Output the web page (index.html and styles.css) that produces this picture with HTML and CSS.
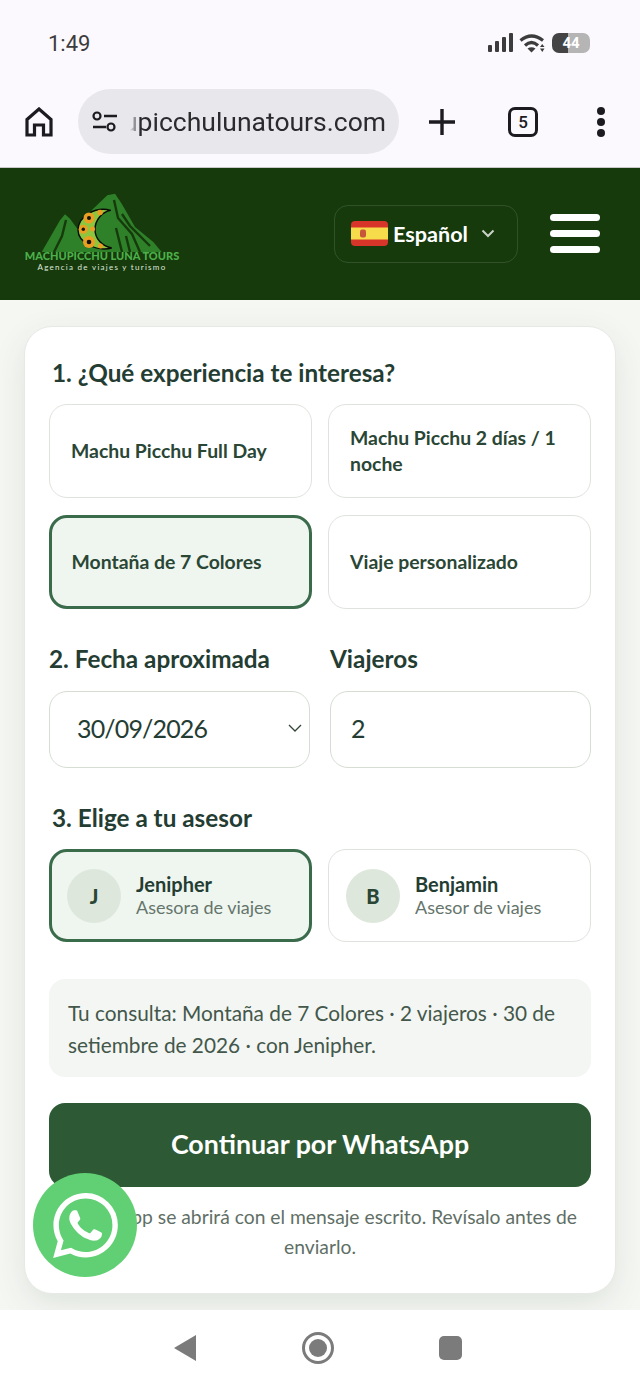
FILE: index.html
```html
<!DOCTYPE html>
<html lang="es">
<head>
    <meta charset="UTF-8">
    <title>Machupicchu Luna Tours</title>
    <link rel="stylesheet" href="styles.css">
</head>
<body>
<div class="page">
    <!-- navegador -->
    <div class="chrome">
        <div class="status">
            <span class="time">1:49</span>
            <div class="status-icons">
                <svg class="ic-signal" width="25" height="20" viewBox="0 0 25 20"><rect x="0" y="12" width="4" height="7" rx="1"/><rect x="7" y="8" width="4" height="11" rx="1"/><rect x="14" y="4" width="4" height="15" rx="1"/><rect x="21" y="0" width="4" height="19" rx="1"/></svg>
                <svg class="ic-wifi" width="27" height="20" viewBox="0 0 27 20"><path d="M1.500 7.500Q12.500-1.500 24 7.500M6 12.500Q12.500 6.500 19 12.500" fill="none" stroke="#3c3c3c" stroke-width="3.200"/><path d="M8.500 15.500Q12.500 13 16.500 15.500L12.500 19.500Z" fill="#3c3c3c"/><path d="M21 14h4.500l-2.250-3ZM21 15.500h4.500l-2.250 3.500Z" fill="#3c3c3c"/></svg>
                <div class="battery"><span>44</span></div>
            </div>
        </div>
        <div class="toolbar">
            <svg class="ic-home" width="28" height="30" viewBox="0 0 28 30"><path d="M2 12.500 14 2l12 10.500V28h-7.500v-10h-9v10H2Z" fill="none" stroke="#1c1b1f" stroke-width="3.200" stroke-linejoin="miter"/></svg>
            <div class="omnibox">
                <svg width="26" height="22" viewBox="0 0 26 22"><circle cx="5" cy="5" r="3.500" fill="none" stroke="#1c1b1f" stroke-width="2.200"/><path d="M12 5h13M1 16h13" stroke="#1c1b1f" stroke-width="2.400"/><circle cx="19" cy="16" r="3.500" fill="none" stroke="#1c1b1f" stroke-width="2.200"/></svg>
                <div class="url"><span>machupicchulunatours.com</span></div>
            </div>
            <svg class="ic-plus" width="26" height="26" viewBox="0 0 26 26"><path d="M13 0v26M0 13h26" stroke="#1c1b1f" stroke-width="3.400"/></svg>
            <div class="tabs">5</div>
            <div class="dots"><i></i><i></i><i></i></div>
        </div>
    </div>

    <!-- cabecera -->
    <header class="site-header">
        <div class="logo">
            <svg class="logo-art" width="156" height="60" viewBox="0 0 156 60">
                <path d="M17.700 60 36 28.300 41 22.300 46 26.700 53.300 36.700 67.700 18.300 83.300 3.300 91 1.700 97.700 11.700 104.300 23.300 111 35 129.300 50 137.700 60Z" fill="#2e8029"/>
                <path d="M90 8 94 26 108 42 116 60M98 22 106 34 126 54M42 28 38 44 30 60M102 44 106 60M92 36 98 60" fill="none" stroke="#163a0c" stroke-width="2.400"/>
                <path d="M86.700 18.300C72 14 54 24 54 38 54 50 72 60 87.700 56 78 54 71 47 71 37.300 71 28 78 20 86.700 18.300Z" fill="#8cc63f" stroke="#0b0b05" stroke-width="1.400"/>
                <circle cx="65" cy="26" r="5.500" fill="#eb9f22"/><circle cx="65" cy="26" r="2" fill="#111"/>
                <circle cx="59.300" cy="37.300" r="4.500" fill="#eb9f22"/><circle cx="59.300" cy="37.300" r="1.700" fill="#111"/>
                <circle cx="65" cy="50" r="6" fill="#eb9f22"/><circle cx="65" cy="50" r="2.300" fill="#111"/>
                <circle cx="76" cy="20.500" r="2.800" fill="#eb9f22"/>
                <circle cx="68.500" cy="37" r="2.500" fill="#eb9f22"/>
                <circle cx="76.500" cy="54" r="2.500" fill="#eb9f22"/>
            </svg>
            <div class="logo-name">MACHUPICCHU LUNA TOURS</div>
            <div class="logo-tag">Agencia de viajes y turismo</div>
        </div>
        <div class="header-right">
            <div class="lang">
                <svg class="flag" width="37" height="25" viewBox="0 0 37 25"><rect width="37" height="25" rx="4" fill="#d8352a"/><rect y="6.500" width="37" height="12" fill="#f6dc4a"/><rect x="9" y="8.500" width="6" height="8" rx="2" fill="#c8553a"/></svg>
                <span>Español</span>
                <svg width="14" height="9" viewBox="0 0 14 9"><path d="M1.500 1.500 7 7l5.500-5.500" fill="none" stroke="#c9d3c5" stroke-width="2"/></svg>
            </div>
            <div class="burger"><i></i><i></i><i></i></div>
        </div>
    </header>

    <!-- formulario -->
    <main class="main">
        <section class="card">
            <h2 class="step step-in">1. ¿Qué experiencia te interesa?</h2>
            <div class="options">
                <div class="option">Machu Picchu Full Day</div>
                <div class="option">Machu Picchu 2 días / 1 noche</div>
                <div class="option selected">Montaña de 7 Colores</div>
                <div class="option">Viaje personalizado</div>
            </div>

            <div class="fields">
                <div class="field">
                    <h2 class="step">2. Fecha aproximada</h2>
                    <div class="box box-date">
                        <span class="num">30/09/2026</span>
                        <svg width="14" height="8" viewBox="0 0 14 8"><path d="M1 1 7 7l6-6" fill="none" stroke="#33443a" stroke-width="1.300"/></svg>
                    </div>
                </div>
                <div class="field">
                    <h2 class="step">Viajeros</h2>
                    <div class="box"><span class="num">2</span></div>
                </div>
            </div>

            <h2 class="step step-in step-3">3. Elige a tu asesor</h2>
            <div class="advisors">
                <div class="advisor selected">
                    <div class="avatar">J</div>
                    <div class="adv-text">
                        <div class="adv-name">Jenipher</div>
                        <div class="adv-role">Asesora de viajes</div>
                    </div>
                </div>
                <div class="advisor">
                    <div class="avatar">B</div>
                    <div class="adv-text">
                        <div class="adv-name">Benjamin</div>
                        <div class="adv-role">Asesor de viajes</div>
                    </div>
                </div>
            </div>

            <div class="summary">Tu consulta: Montaña de 7 Colores · 2 viajeros · 30 de setiembre de 2026 · con Jenipher.</div>
            <div class="send">Continuar por WhatsApp</div>
            <p class="note">WhatsApp se abrirá con el mensaje escrito. Revísalo antes de enviarlo.</p>
        </section>
    </main>

    <!-- barra android -->
    <div class="navbar">
        <svg width="22" height="26" viewBox="0 0 22 26"><path d="M22 0v26L0 13Z" fill="#7b7b7b"/></svg>
        <svg width="32" height="32" viewBox="0 0 32 32"><circle cx="16" cy="16" r="14.500" fill="none" stroke="#7b7b7b" stroke-width="3"/><circle cx="16" cy="16" r="9" fill="#7b7b7b"/></svg>
        <div class="nav-square"></div>
    </div>

    <div class="wa-float">
        <svg width="65" height="65" viewBox="0 0 24 24"><path fill="#fff" d="M17.472 14.382c-.297-.149-1.758-.867-2.03-.967-.273-.099-.471-.148-.67.15-.197.297-.767.966-.94 1.164-.173.199-.347.223-.644.075-.297-.15-1.255-.463-2.39-1.475-.883-.788-1.48-1.761-1.653-2.059-.173-.297-.018-.458.13-.606.134-.133.298-.347.446-.52.149-.174.198-.298.298-.497.099-.198.05-.371-.025-.52-.075-.149-.669-1.612-.916-2.207-.242-.579-.487-.5-.669-.51-.173-.008-.371-.01-.57-.01-.198 0-.52.074-.792.372-.272.297-1.04 1.016-1.04 2.479 0 1.462 1.065 2.875 1.213 3.074.149.198 2.096 3.2 5.077 4.487.709.306 1.262.489 1.694.625.712.227 1.36.195 1.871.118.571-.085 1.758-.719 2.006-1.413.248-.694.248-1.289.173-1.413-.074-.124-.272-.198-.57-.347m-5.421 7.403h-.004a9.87 9.87 0 01-5.031-1.378l-.361-.214-3.741.982.998-3.648-.235-.374a9.86 9.86 0 01-1.51-5.26c.001-5.45 4.436-9.884 9.888-9.884 2.64 0 5.122 1.03 6.988 2.898a9.825 9.825 0 012.893 6.994c-.003 5.45-4.437 9.884-9.885 9.884m8.413-18.297A11.815 11.815 0 0012.05 0C5.495 0 .16 5.335.157 11.892c0 2.096.547 4.142 1.588 5.945L.057 24l6.305-1.654a11.882 11.882 0 005.683 1.448h.005c6.554 0 11.89-5.335 11.893-11.893a11.821 11.821 0 00-3.48-8.413z"/></svg>
    </div>
</div>
</body>
</html>
```
FILE: styles.css
```css
*{
    box-sizing: border-box;
}
body{
    margin: 0;
    font-family: Lato, "Liberation Sans", sans-serif;
    color: #243d33;
}
.page{
    position: relative;
    width: 640px;
    height: 1386px;
    display: flex;
    flex-direction: column;
    overflow: hidden;
}

/* navegador */
.chrome{
    height: 168px;
    background-color: #fbf9fe;
    border-bottom: 1px solid #c9c9c9;
    font-family: Roboto, sans-serif;
    color: #1c1b1f;
}
.status{
    height: 86px;
    display: flex;
    align-items: center;
    padding: 0 50px 0 48px;
    justify-content: space-between;
}
.time{
    font-size: 22px;
    color: #3c3c3c;
}
.status-icons{
    display: flex;
    align-items: center;
    gap: 6px;
}
.ic-signal{
    fill: #3c3c3c;
}
.battery{
    width: 38px;
    height: 20px;
    border-radius: 7px;
    background: linear-gradient(90deg, #444 0 43%, #b5b5b5 43% 100%);
    color: #fff;
    font-size: 15px;
    font-weight: 700;
    text-align: center;
    line-height: 20px;
}
.toolbar{
    display: flex;
    align-items: center;
    height: 71px;
    padding: 0 0 0 25px;
}
.omnibox{
    width: 321px;
    height: 65px;
    margin-left: 25px;
    border-radius: 33px;
    background-color: #e8e7eb;
    display: flex;
    align-items: center;
    padding: 0 13px 0 14px;
    gap: 12px;
    flex-shrink: 0;
}
.url{
    flex: 1;
    overflow: hidden;
    display: flex;
    justify-content: flex-end;
    white-space: nowrap;
    font-size: 26.500px;
    color: #2b2a2e;
    -webkit-mask-image: linear-gradient(90deg, transparent 0, #000 10px);
    mask-image: linear-gradient(90deg, transparent 0, #000 10px);
}
.ic-plus{
    margin-left: 30px;
}
.tabs{
    width: 30px;
    height: 30px;
    margin-left: 53px;
    border: 3px solid #1c1b1f;
    border-radius: 7px;
    font-size: 17px;
    font-weight: 500;
    text-align: center;
    line-height: 24px;
}
.dots{
    margin-left: 59px;
    display: flex;
    flex-direction: column;
    gap: 3px;
}
.dots i{
    width: 8px;
    height: 8px;
    border-radius: 50%;
    background-color: #1c1b1f;
}

/* cabecera */
.site-header{
    height: 132px;
    background-color: #163a0c;
    display: flex;
    align-items: center;
    justify-content: space-between;
    padding: 0 40px 0 24px;
}
.logo{
    width: 156px;
    text-align: center;
    margin-top: -4px;
}
.logo-art{
    display: block;
    margin-bottom: -3px;
}
.logo-name{
    font-size: 11px;
    font-weight: 900;
    line-height: 13px;
    color: #4cb04a;
    white-space: nowrap;
}
.logo-tag{
    font-size: 8px;
    letter-spacing: 1.270px;
    line-height: 10px;
    color: #dfe8da;
    white-space: nowrap;
}
.header-right{
    display: flex;
    align-items: center;
    gap: 32px;
}
.lang{
    width: 184px;
    height: 58px;
    border: 1px solid rgba(255,255,255,.12);
    border-radius: 14px;
    display: flex;
    align-items: center;
    padding-left: 16px;
    color: #fff;
    font-size: 21.600px;
    font-weight: 700;
    margin-top: -1px;
}
.lang span{
    margin: 0 13px 0 5px;
}
.burger{
    display: flex;
    flex-direction: column;
    gap: 9px;
    margin-top: -1px;
}
.burger i{
    width: 50px;
    height: 7px;
    border-radius: 4px;
    background-color: #fff;
}

/* formulario */
.main{
    flex: 1;
    background-color: #f5f7f3;
    padding: 26px 24px 0;
}
.card{
    height: 968px;
    background-color: #fff;
    border: 1px solid #e6e9e4;
    border-radius: 28px;
    box-shadow: 0 10px 32px rgba(30,60,40,.1);
    padding: 28px 24px 0;
}
.step{
    margin: 0;
    font-size: 24.300px;
    font-weight: 700;
    line-height: 36px;
}
.step-in{
    padding-left: 3px;
}
.options{
    margin-top: 13px;
    display: grid;
    grid-template-columns: 263px 263px;
    gap: 17px 16px;
}
.option{
    height: 94px;
    border: 1.500px solid #dfe3dd;
    border-radius: 18px;
    display: flex;
    align-items: center;
    padding: 0 21px;
    font-size: 19.400px;
    font-weight: 700;
    line-height: 26px;
    color: #2a4635;
}
.option.selected{
    border: 3px solid #3a6b4b;
    background-color: #eff6f0;
    padding: 0 19.500px;
}
.fields{
    margin-top: 32px;
    display: grid;
    grid-template-columns: 261px 261px;
    gap: 20px;
}
.box{
    height: 77px;
    margin-top: 14px;
    border: 1.500px solid #d6ddd3;
    border-radius: 18px;
    display: flex;
    align-items: center;
    padding: 0 20px 3px;
    font-size: 25px;
}
.num{
    letter-spacing: -.85px;
}
.box-date{
    justify-content: space-between;
    padding: 0 7px 3px 27px;
}
.step-3{
    margin-top: 32px;
}
.advisors{
    margin-top: 13px;
    display: grid;
    grid-template-columns: 263px 263px;
    gap: 16px;
}
.advisor{
    height: 93px;
    border: 1.500px solid #dfe3dd;
    border-radius: 18px;
    display: flex;
    align-items: center;
    gap: 15px;
    padding-left: 17px;
}
.advisor.selected{
    border: 3px solid #3a6b4b;
    background-color: #eff6f0;
    padding-left: 15px;
}
.avatar{
    width: 54px;
    height: 54px;
    border-radius: 50%;
    background-color: #dee7dc;
    display: flex;
    align-items: center;
    justify-content: center;
    font-size: 20px;
    font-weight: 900;
    color: #2a4635;
}
.adv-text{
    padding-bottom: 2px;
}
.adv-name{
    font-size: 20px;
    font-weight: 700;
    line-height: 24px;
}
.adv-role{
    font-size: 18px;
    line-height: 22px;
    color: #65756b;
}
.summary{
    margin-top: 37px;
    height: 98px;
    border-radius: 16px;
    background-color: #f3f6f2;
    padding: 18px 19px;
    font-size: 20.800px;
    line-height: 32px;
    color: #43574b;
}
.send{
    margin-top: 26px;
    height: 84px;
    padding-bottom: 2px;
    border-radius: 16px;
    background-color: #2d5a34;
    color: #fff;
    font-size: 26.800px;
    font-weight: 700;
    display: flex;
    align-items: center;
    justify-content: center;
}
.note{
    margin: 15px 0 0;
    font-size: 19.300px;
    line-height: 30px;
    text-align: center;
    color: #5f6f66;
}

/* barra android */
.navbar{
    height: 76px;
    background-color: #fff;
    display: flex;
    align-items: center;
    padding: 0 178px 0 174px;
    justify-content: space-between;
}
.nav-square{
    width: 23px;
    height: 24px;
    border-radius: 5px;
    background-color: #7b7b7b;
}

/* boton flotante */
.wa-float{
    position: absolute;
    left: 33px;
    top: 1173px;
    width: 104px;
    height: 104px;
    border-radius: 50%;
    background-color: #61d074;
    display: flex;
    align-items: center;
    justify-content: center;
}
```
